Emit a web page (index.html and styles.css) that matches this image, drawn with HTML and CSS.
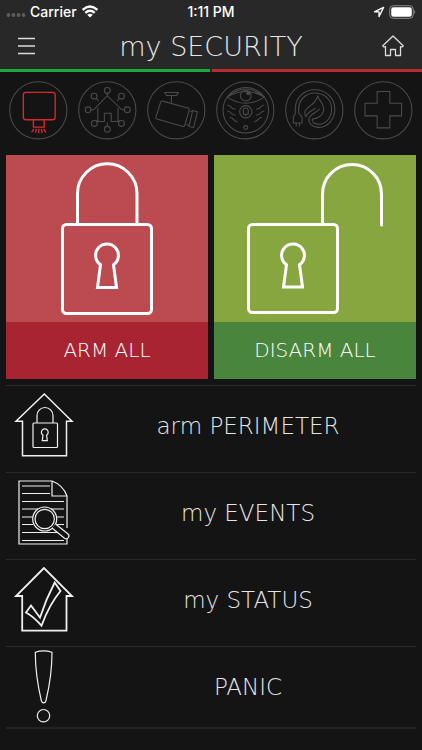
FILE: index.html
```html
<!DOCTYPE html>
<html lang="en">
<head>
    <meta charset="UTF-8">
    <meta name="viewport" content="width=device-width, initial-scale=1.0">
    <title>my SECURITY</title>
    <link rel="stylesheet" href="styles.css">
</head>
<body>
    <!-- Header -->
    <header>
        <div class="status-bar">
            <div class="carrier">
                <svg class="signal" viewBox="0 0 20 10" width="20" height="10"><circle cx="2.5" cy="8" r="1.9"/><circle cx="7.5" cy="8" r="1.9"/><circle cx="12.5" cy="8" r="1.9"/><circle cx="17.5" cy="8" r="1.9"/></svg>
                <span>Carrier</span>
                <svg viewBox="0 0 18 13" width="18" height="13" fill="none" stroke="#fff" stroke-width="2.4"><path d="M1.6 4.8Q9-1.6 16.4 4.8M4.3 7.8Q9 3.8 13.7 7.8"/><path d="M9 12.5L6.2 9.8Q9 7.6 11.8 9.8Z" fill="#fff" stroke="none"/></svg>
            </div>
            <span>1:11 PM</span>
            <div class="battery">
                <svg viewBox="0 0 12 12" width="12" height="12" fill="none" stroke="#fff" stroke-width="1.3" stroke-linejoin="round"><path d="M10.6 1.4L1.4 5.8H6V10.6Z"/></svg>
                <svg viewBox="0 0 27 14" width="27" height="14"><rect x=".7" y=".7" width="23.6" height="12.6" rx="3.6" fill="none" stroke="#8a8a8a"/><rect x="2.2" y="2.2" width="20.6" height="9.6" rx="2.2" fill="#fff"/><path d="M25.4 4.8Q27.2 7 25.4 9.2Z" fill="#8a8a8a"/></svg>
            </div>
        </div>
        <nav>
            <button class="nav-btn" aria-label="Menu">
                <svg viewBox="0 0 24 24" width="24" height="24"><path d="M2 4.5H19M2 12H19M2 19.5H19"/></svg>
            </button>
            <h1>my SECURITY</h1>
            <a href="#" class="nav-btn" aria-label="Home">
                <svg viewBox="0 0 24 24" width="24" height="24" stroke-linejoin="round"><path d="M11 2L.8 11.8Q1.5 13.6 3.5 12.6V21.5H8.5V15.5H13.5V21.5H18.5V12.6Q20.5 13.6 21.2 11.8Z"/></svg>
            </a>
        </nav>
        <div class="tab-lines"><span class="line-green"></span><span class="line-red"></span></div>
    </header>

    <!-- Section icons -->
    <div class="sections">
        <button class="section-btn active" aria-label="Security">
            <svg viewBox="0 0 60 60"><circle class="ring" cx="30" cy="30" r="29.3"/><rect x="14.7" y="11.7" width="32.6" height="28" rx="2.5"/><path d="M25 40V47.3H36V40M25.5 49L23.2 52.5M28 49L27 53M30.5 49V53.5M33 49L34 53M35.5 49L37.8 52.5"/></svg>
        </button>
        <button class="section-btn" aria-label="Smart home">
            <svg viewBox="0 0 60 60"><circle cx="30" cy="30" r="29.3"/><circle cx="30" cy="9.7" r="3"/><circle cx="16.5" cy="15.5" r="3"/><circle cx="44.5" cy="15.5" r="3"/><circle cx="10.3" cy="29.5" r="3"/><circle cx="50.5" cy="29.5" r="3"/><circle cx="16.7" cy="43.5" r="3"/><circle cx="44.5" cy="43.5" r="3"/><circle cx="30" cy="49.5" r="3"/><path d="M13.3 29.5H16L30 15L45 29.5H47.5M20.3 27.5V41.5H27V33H34V41.5H41V27.5M30 12.7V15M18.6 17.6L21 20.5M42.4 17.6L40 20.5M18.8 41.4L20.3 40M42.4 41.4L41 40M30 42.5V46.5"/></svg>
        </button>
        <button class="section-btn" aria-label="Cameras">
            <svg viewBox="0 0 60 60"><circle cx="30" cy="30" r="29.3"/><path d="M18.3 11.7H32L30.5 14.8H20ZM25 15V22M16 20.6L42.5 28Q43.6 28.4 43.2 29.5L38.6 45.6Q38.2 46.8 37 46.5L10.2 39Q8.7 38.5 9.2 37L14 21.7Q14.5 20.2 16 20.6ZM44 31H46.7M40.5 44.5L43 45.5M46.7 30.3L51.7 31.7L47.7 47.8L43 46.5Z"/></svg>
        </button>
        <button class="section-btn" aria-label="Door bell">
            <svg viewBox="0 0 60 60"><circle cx="30" cy="30" r="29.3"/><circle cx="30.5" cy="30" r="23.3"/><path d="M11.5 16.5Q30.5 0 49.5 16.5Q30.5 29 11.5 16.5Q30.5 5 49.5 16.5"/><circle cx="30.5" cy="15" r="5.5"/><circle cx="33" cy="12.5" r="1.5" fill="#4b4b4b"/><circle cx="30.5" cy="31.5" r="6.3"/><path d="M28 34V30Q28 27.6 30.5 27.6T33 30V34ZM30.5 34V36"/><circle cx="30.5" cy="47.7" r="2"/><path d="M11.5 25Q13.5 24.5 15 26.5T20 29M11.5 31Q13.5 30.5 15 32.5T20 35M14 37.5Q16 37 17.5 39T22 42M49.5 25Q47.5 24.5 46 26.5T41 29M49.5 31Q47.5 30.5 46 32.5T41 35M47 37.5Q45 37 43.5 39T39 42"/></svg>
        </button>
        <button class="section-btn" aria-label="Energy">
            <svg viewBox="0 0 60 60"><circle cx="30" cy="30" r="29.3"/><path d="M10.5 34V29C10.5 17 19.5 9 30.5 9C42 9 51 17.5 51 28.5C51 39 44 47.5 35 47.5C28 47.5 23.5 43 24.5 38.5C25.5 34.5 31 33 35.5 28.5"/><path d="M14 33V29C14 19 21.5 12.3 30.5 12.3C40 12.3 47.7 19 47.7 28.5C47.7 38 41.5 44.3 35 44.3C30 44.3 27 42 28 39C36 38 40.5 33 39.5 27C38.8 22 34.5 20 33.5 15C32.5 24 23 25 20.5 31Q19.5 34 21.5 36.5C23 32 27.5 30.5 31.5 27.5"/><path d="M10.5 34L8.5 36.5V43H17.5V37L14 33M11.5 43V46.5M15 43V46.5"/></svg>
        </button>
        <button class="section-btn" aria-label="Medical">
            <svg viewBox="0 0 60 60"><circle cx="30" cy="30" r="29.3"/><path d="M23.7 10.7H36.7V22.7H48.7V35.7H36.7V48H23.7V35.7H11.3V22.7H23.7Z"/></svg>
        </button>
    </div>

    <main>
        <!-- Arm / Disarm -->
        <div class="cards">
            <button class="card arm">
                <svg viewBox="0 0 202 167"><rect x="56.5" y="69.5" width="89" height="89" rx="4"/><path d="M71.5 69V38.5A29.75 29.75 0 0 1 131 38.5V69M94.5 109.8A11.4 11.4 0 1 1 107.5 109.8L110.5 132.5H91.5Z"/></svg>
                <span class="card-label">ARM ALL</span>
            </button>
            <button class="card disarm">
                <svg viewBox="0 0 202 167"><rect x="34.5" y="69.5" width="89" height="88" rx="4"/><path d="M108.5 69V39A29.5 29.5 0 0 1 167.5 39V70M72.5 109.8A11.4 11.4 0 1 1 85.5 109.8L88.5 132H69.5Z"/></svg>
                <span class="card-label">DISARM ALL</span>
            </button>
        </div>

        <!-- Menu -->
        <ul class="menu">
            <li>
                <a href="#">
                    <svg viewBox="0 0 74 80"><path d="M38.3 8L10 35.3H16.5V69.7H60.5V35.3H66Z" stroke-width="1.5"/><rect x="27" y="37" width="24.5" height="24.5" rx="1"/><path d="M31 37V29.5A8 8 0 0 1 47 29.5V37M37 49.2A3.4 3.4 0 1 1 40.6 49.2L41.3 54.7H36.3Z"/></svg>
                    <span>arm PERIMETER</span>
                </a>
            </li>
            <li>
                <a href="#">
                    <svg viewBox="0 0 74 80"><path d="M61 55V23Q57 12 46 8H13V71H61V66M46 8V23H61"/><path d="M16 13H44M16 20.5H44M16 28.5H58M16 36H32M45 36H58M16 44H27M51 44H58M16 51.5H27M51 51.5H58M16 59.5H58M16 67.5H58"/><circle cx="38.7" cy="46" r="12"/><circle cx="38.7" cy="46" r="9.7"/><path d="M46 55L58.5 65.3Q61 66.5 62.5 64.5Q63.8 62.5 61.8 60.8L49.5 51" fill="#141414"/></svg>
                    <span>my EVENTS</span>
                </a>
            </li>
            <li>
                <a href="#">
                    <svg viewBox="0 0 74 80"><path d="M38 8L10 36H16.2V70.7H60.5V36H66Z" stroke-width="1.8"/><path d="M20 52.5L25 45.5L34 57.5Q40 39 48.7 22.5L54.5 31Q43 45 35.5 65.7Q28 57 20 52.5Z" stroke-width="1.8"/></svg>
                    <span>my STATUS</span>
                </a>
            </li>
            <li>
                <a href="#">
                    <svg viewBox="0 0 74 80"><path d="M29.3 5.2Q37.5 2.5 46 5.2Q46 28 40 53.5Q39.5 55.8 37.7 55.8T35.3 53.5Q29.3 28 29.3 5.2Z"/><circle cx="37.5" cy="68.7" r="6.2"/></svg>
                    <span>PANIC</span>
                </a>
            </li>
        </ul>
    </main>
</body>
</html>
```
FILE: styles.css
```css
/* General Reset */
* {
    margin: 0;
    padding: 0;
    box-sizing: border-box;
}

body {
    background-color: #141414;
    color: #e6e6e6;
    font-family: "DejaVu Sans Light", "DejaVu Sans", sans-serif;
    font-weight: 200;
}

button {
    background: none;
    border: none;
    color: inherit;
    font: inherit;
    cursor: pointer;
}

a {
    color: inherit;
    text-decoration: none;
}

svg {
    display: block;
}

/* Header */
header {
    background-color: #282828;
}

.status-bar {
    display: grid;
    grid-template-columns: 1fr auto 1fr;
    align-items: center;
    height: 23px;
    padding: 0 6px;
    color: #fff;
    font-family: Inter, sans-serif;
    font-size: 14px;
    font-weight: 500;
}

.carrier, .battery {
    display: flex;
    align-items: center;
    gap: 4px;
}

.battery {
    justify-content: flex-end;
}

.signal {
    fill: #5c5c5c;
}

nav {
    display: flex;
    justify-content: space-between;
    align-items: center;
    height: 46px;
    padding: 0 16px;
}

h1 {
    font-size: 27px;
    font-weight: 200;
}

.nav-btn svg {
    fill: none;
    stroke: #dcdcdc;
    stroke-width: 1.3;
}

.tab-lines {
    display: flex;
    gap: 2px;
}

.tab-lines span {
    flex: 1;
    height: 3px;
}

.line-green {
    background-color: #1fa63c;
}

.line-red {
    background-color: #b92b32;
}

/* Section icons */
.sections {
    display: flex;
    justify-content: space-between;
    padding: 9px 9px 15px;
}

.section-btn {
    width: 14.5%;
}

.section-btn svg {
    width: 100%;
    fill: none;
    stroke: #4b4b4b;
    stroke-width: 1.1;
}

.section-btn.active svg {
    stroke: #d8292c;
    stroke-width: 1.4;
}

.section-btn.active .ring {
    stroke: #4b4b4b;
    stroke-width: 1.1;
}

/* Arm / Disarm */
main {
    padding: 0 6px;
}

.cards {
    display: grid;
    grid-template-columns: 1fr 1fr;
    gap: 6px;
    margin-bottom: 6px;
}

.card {
    color: #fff;
    font-size: 20px;
}

.card svg {
    width: 100%;
    fill: none;
    stroke: #fff;
    stroke-width: 3;
    stroke-linecap: round;
}

.card-label {
    display: block;
    line-height: 57px;
}

.arm {
    background-color: #bb4b50;
}

.arm .card-label {
    background-color: #a92433;
}

.disarm {
    background-color: #87a63f;
}

.disarm .card-label {
    background-color: #4a853d;
}

/* Menu */
.menu {
    list-style: none;
    border-bottom: 2px solid #222;
}

.menu li {
    border-top: 1px solid #2a2a2a;
    padding-bottom: 6px;
}

.menu li:last-child {
    padding-bottom: 0;
}

.menu a {
    display: flex;
    align-items: center;
    font-size: 23px;
}

.menu svg {
    width: 74px;
    height: 80px;
    fill: none;
    stroke: #f0f0f0;
    stroke-width: 1.2;
}

.menu span {
    flex: 1;
    text-align: center;
}
```
